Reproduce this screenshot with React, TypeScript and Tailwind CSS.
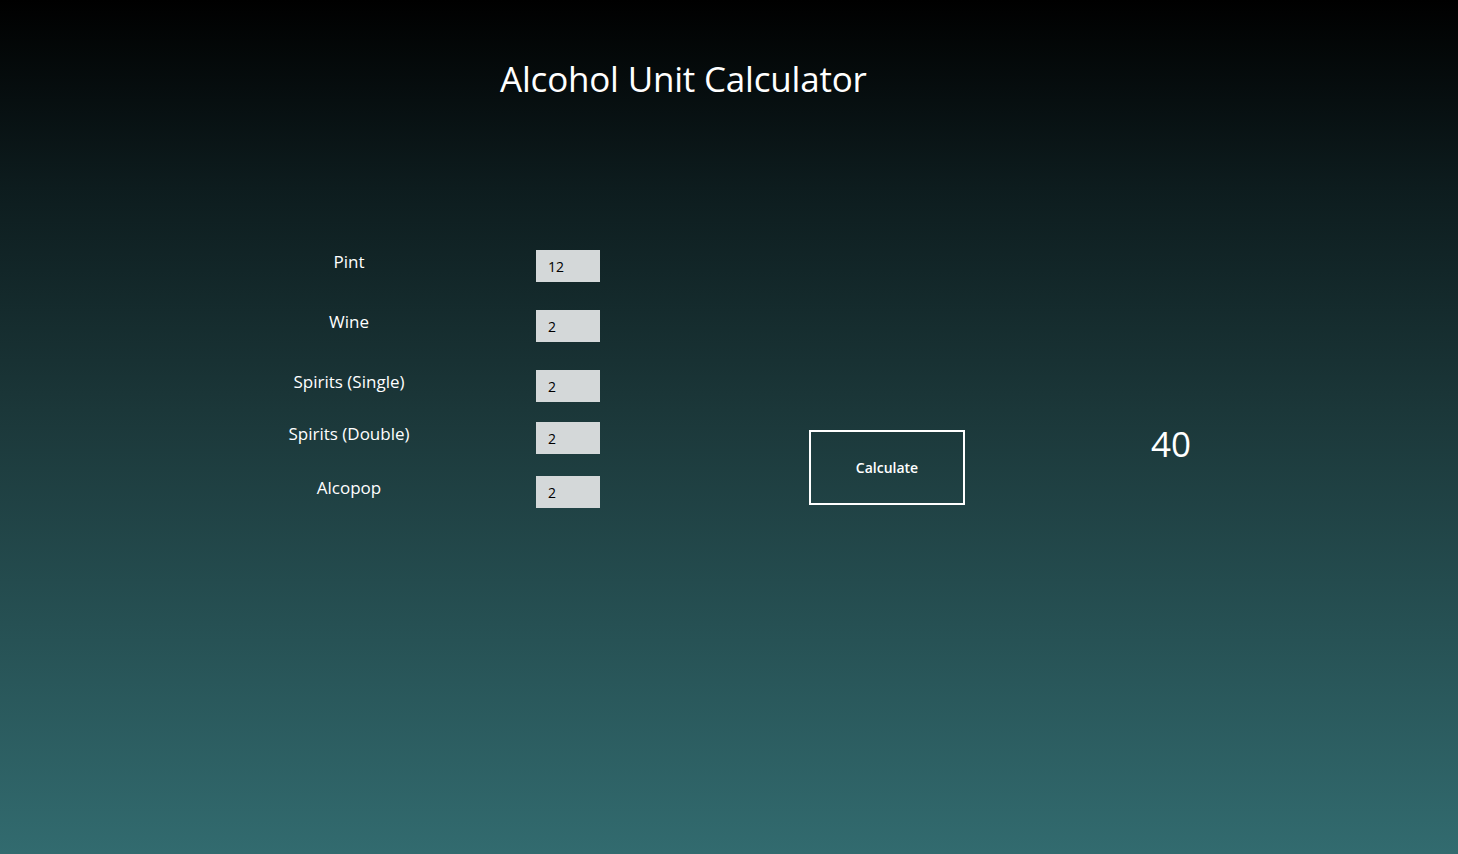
import React from "react";

const rows = [
  { label: "Pint", value: "12", mt: "mt-0" },
  { label: "Wine", value: "2", mt: "mt-[28px]" },
  { label: "Spirits (Single)", value: "2", mt: "mt-[28px]" },
  { label: "Spirits (Double)", value: "2", mt: "mt-[20px]" },
  { label: "Alcopop", value: "2", mt: "mt-[22px]" },
];

export default function App() {
  return (
    <div
      className="w-full h-[854px] overflow-hidden text-white bg-[linear-gradient(to_bottom,#000000_0%,#0d1c1e_22%,#1b3739_48%,#326b6f_100%)]"
      style={{ fontFamily: '"Open Sans", "Noto Sans", sans-serif' }}
    >
      <div className="pt-[56px] pl-[500px] text-[35px] leading-[46px] tracking-[-0.2px]">
        Alcohol Unit Calculator
      </div>
      <div className="flex items-start mt-[148px]">
        <div className="flex flex-col">
          {rows.map((r) => (
            <div key={r.label} className={`flex items-center h-[32px] ${r.mt}`}>
              <div className="w-[200px] ml-[249px] text-center text-[17px] leading-[24px] -mt-[8px]">
                {r.label}
              </div>
              <input
                readOnly
                value={r.value}
                className="ml-[87px] w-[64px] h-[32px] bg-[#d4d8d9] text-black text-[14px] pl-[12px] outline-none"
              />
            </div>
          ))}
        </div>
        <div className="flex items-start mt-[180px]">
          <button className="ml-[209px] w-[156px] h-[75px] border-2 border-white text-[14px] font-semibold text-white">
            Calculate
          </button>
          <div className="ml-[186px] -mt-[10px] text-[35px] leading-[48px]">40</div>
        </div>
      </div>
    </div>
  );
}
